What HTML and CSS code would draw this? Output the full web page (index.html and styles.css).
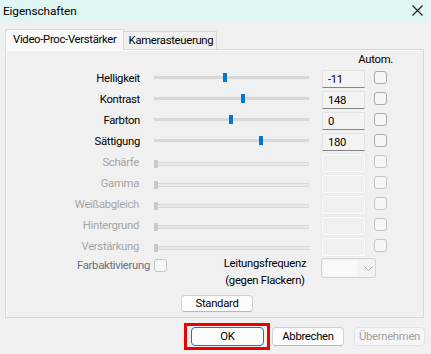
FILE: index.html
```html
<!DOCTYPE html>
<html lang="de">
<head>
    <meta charset="UTF-8">
    <meta name="viewport" content="width=device-width, initial-scale=1.0">
    <title>Eigenschaften</title>
    <link rel="stylesheet" href="styles.css">
</head>
<body>
    <div class="window">
        <!-- Title bar -->
        <div class="titlebar">
            <span class="title">Eigenschaften</span>
            <svg class="close" width="11" height="11" viewBox="0 0 11 11">
                <path d="M0.5 0.5 L10.5 10.5 M10.5 0.5 L0.5 10.5" stroke="#1a1a1a" stroke-width="1.1" fill="none"/>
            </svg>
        </div>

        <!-- Tabs -->
        <div class="tabs">
            <div class="tab active">Video-Proc-Verstärker</div>
            <div class="tab">Kamerasteuerung</div>
        </div>

        <!-- Tab page -->
        <div class="panel">
            <div class="grid">
                <div class="autom">Autom.</div>

                <div class="label">Helligkeit</div>
                <div class="slider"><div class="track"></div><div class="thumb" style="left: 69px"></div></div>
                <div class="value">-11</div>
                <div class="check"></div>

                <div class="label">Kontrast</div>
                <div class="slider"><div class="track"></div><div class="thumb" style="left: 87px"></div></div>
                <div class="value">148</div>
                <div class="check"></div>

                <div class="label">Farbton</div>
                <div class="slider"><div class="track"></div><div class="thumb" style="left: 75px"></div></div>
                <div class="value">0</div>
                <div class="check"></div>

                <div class="label">Sättigung</div>
                <div class="slider"><div class="track"></div><div class="thumb" style="left: 105px"></div></div>
                <div class="value">180</div>
                <div class="check"></div>

                <div class="label off">Schärfe</div>
                <div class="slider off"><div class="track"></div><div class="thumb"></div></div>
                <div class="value off"></div>
                <div class="check off"></div>

                <div class="label off">Gamma</div>
                <div class="slider off"><div class="track"></div><div class="thumb"></div></div>
                <div class="value off"></div>
                <div class="check off"></div>

                <div class="label off">Weißabgleich</div>
                <div class="slider off"><div class="track"></div><div class="thumb"></div></div>
                <div class="value off"></div>
                <div class="check off"></div>

                <div class="label off">Hintergrund</div>
                <div class="slider off"><div class="track"></div><div class="thumb"></div></div>
                <div class="value off"></div>
                <div class="check off"></div>

                <div class="label off">Verstärkung</div>
                <div class="slider off"><div class="track"></div><div class="thumb"></div></div>
                <div class="value off"></div>
                <div class="check off"></div>
            </div>

            <div class="extra">
                <div class="color-enable">
                    <span>Farbaktivierung</span>
                    <div class="check off"></div>
                </div>
                <div class="freq-label">Leitungsfrequenz<br>(gegen Flackern)</div>
                <div class="dropdown">
                    <div class="dropdown-field"></div>
                    <svg width="9" height="5" viewBox="0 0 9 5">
                        <path d="M0.5 0.5 L4.5 4.5 L8.5 0.5" stroke="#a8a8a8" stroke-width="1" fill="none"/>
                    </svg>
                </div>
            </div>

            <div class="std-row">
                <button class="btn std">Standard</button>
            </div>
        </div>

        <!-- Dialog buttons -->
        <div class="footer">
            <span class="highlight"><button class="btn ok">OK</button></span>
            <button class="btn cancel">Abbrechen</button>
            <button class="btn apply" disabled>Übernehmen</button>
        </div>
    </div>
</body>
</html>
```

FILE: styles.css
```css
* {
    margin: 0;
    padding: 0;
    box-sizing: border-box;
}

body {
    font-family: Roboto, "Noto Sans", sans-serif;
    font-size: 11.3px;
    letter-spacing: -0.3px;
    color: #000;
    background-color: #f0f0f0;
    overflow: hidden;
}

.window {
    width: 431px;
    height: 354px;
}

.titlebar {
    height: 22px;
    background-color: #e0f6f5;
    display: flex;
    align-items: center;
    justify-content: space-between;
    padding: 0 8px 1px 3px;
    font-size: 11.8px;
    letter-spacing: -0.1px;
}

.close {
    display: block;
}

/* Tabs */
.tabs {
    display: flex;
    align-items: flex-end;
    height: 27px;
    padding-left: 5px;
}

.tab {
    height: 18px;
    line-height: 18px;
    padding: 0 3px 0 5px;
    border: 1px solid #d9d9d9;
    border-bottom: none;
    border-left: none;
    background-color: #f0f0f0;
}

.tab.active {
    height: 21px;
    line-height: 20px;
    padding: 0 6px 0 7px;
    border-left: 1px solid #d9d9d9;
    background-color: #f9f9f9;
    position: relative;
    top: 1px;
}

.panel {
    margin: 0 7px 0 5px;
    height: 269px;
    border: 1px solid #d9d9d9;
    box-shadow: inset 1px 1px 0 #fbfbfb;
    background-color: #f0f0f0;
}

/* Controls grid */
.grid {
    display: grid;
    grid-template-columns: 148px 168px 52px 13px;
    grid-template-rows: 15px;
    grid-auto-rows: 18px;
    row-gap: 3px;
    padding-top: 2px;
}

.autom {
    grid-column: 4;
    justify-self: end;
    margin-right: -6px;
    line-height: 15px;
    white-space: nowrap;
}

.label {
    grid-column: 1;
    text-align: right;
    padding-right: 14px;
    line-height: 17px;
}

.label.off {
    color: #a6a6a6;
    padding-right: 15px;
}

.slider {
    position: relative;
    width: 155px;
    display: flex;
    align-items: center;
}

.track {
    width: 100%;
    height: 3px;
    margin-top: -3px;
    background-color: #d8d8d8;
}

.thumb {
    position: absolute;
    top: 3px;
    width: 4px;
    height: 9px;
    background-color: #0078d4;
}

.slider.off .track {
    height: 4px;
    margin-top: 2px;
    margin-left: 4px;
    background-color: #e8e8e8;
    border-top: 1px solid #d7dada;
    border-bottom: 1px solid #d7dada;
}

.slider.off .thumb {
    top: 6px;
    left: 0;
    width: 4px;
    height: 8px;
    background-color: #cacaca;
}

.value {
    width: 43px;
    height: 18px;
    padding-left: 5px;
    line-height: 17px;
    background-color: #f3f3f3;
    border: 1px solid #e2e2e2;
    border-bottom: 1px solid #858585;
    border-radius: 2px 2px 0 0;
}

.value.off {
    border: 1px solid #fafafa;
    background-color: #f0f0f0;
    box-shadow: 0 0 0 0.5px #e6e6e6;
}

.check {
    width: 13px;
    height: 13px;
    margin-top: 1px;
    border: 1px solid #ababab;
    border-radius: 3px;
    background-color: #f6f6f6;
}

.check.off {
    border-color: #c6c6c6;
}

/* Lower options */
.extra {
    display: flex;
    align-items: flex-start;
    margin-top: -1px;
    height: 40px;
}

.color-enable {
    display: flex;
    align-items: center;
    justify-content: flex-end;
    gap: 4px;
    width: 161px;
    margin-top: 4px;
    color: #6e6e7e;
}

.color-enable .check {
    margin-top: 0;
}

.freq-label {
    width: 110px;
    margin-left: 43px;
    text-align: center;
    line-height: 17px;
}

.dropdown {
    display: flex;
    align-items: center;
    width: 55px;
    height: 20px;
    margin-left: 1px;
    margin-top: 3px;
    border: 1px solid #d4d4d4;
    border-radius: 3px;
    background-color: #f3f3f3;
    padding: 1px;
}

.dropdown-field {
    width: 34px;
    height: 100%;
    background-color: #f9f9f9;
    margin-right: 7px;
}

.std-row {
    display: flex;
    padding-left: 175px;
}

/* Buttons */
.btn {
    font-family: Roboto, "Noto Sans", sans-serif;
    font-size: 11.3px;
    letter-spacing: -0.3px;
    color: #000;
    height: 19px;
    line-height: 16px;
    background-color: #fdfdfd;
    border: 1px solid #d0d0d0;
    border-bottom-color: #b8b8b8;
    border-radius: 4px;
}

.std {
    width: 72px;
    height: 17px;
    line-height: 14px;
}

.footer {
    display: flex;
    align-items: center;
    justify-content: flex-end;
    padding: 5px 6px 0 0;
}

.highlight {
    display: flex;
    border: 3px solid #ee0000;
    padding: 1px 3px 1px 4px;
}

.ok {
    width: 73px;
    border-color: #2a6fb8;
}

.cancel {
    width: 72px;
    margin-left: 2px;
}

.apply {
    width: 71px;
    margin-left: 10px;
    color: #a3a3a3;
    background-color: #f5f5f5;
    border-color: #e3e3e3;
}
```
